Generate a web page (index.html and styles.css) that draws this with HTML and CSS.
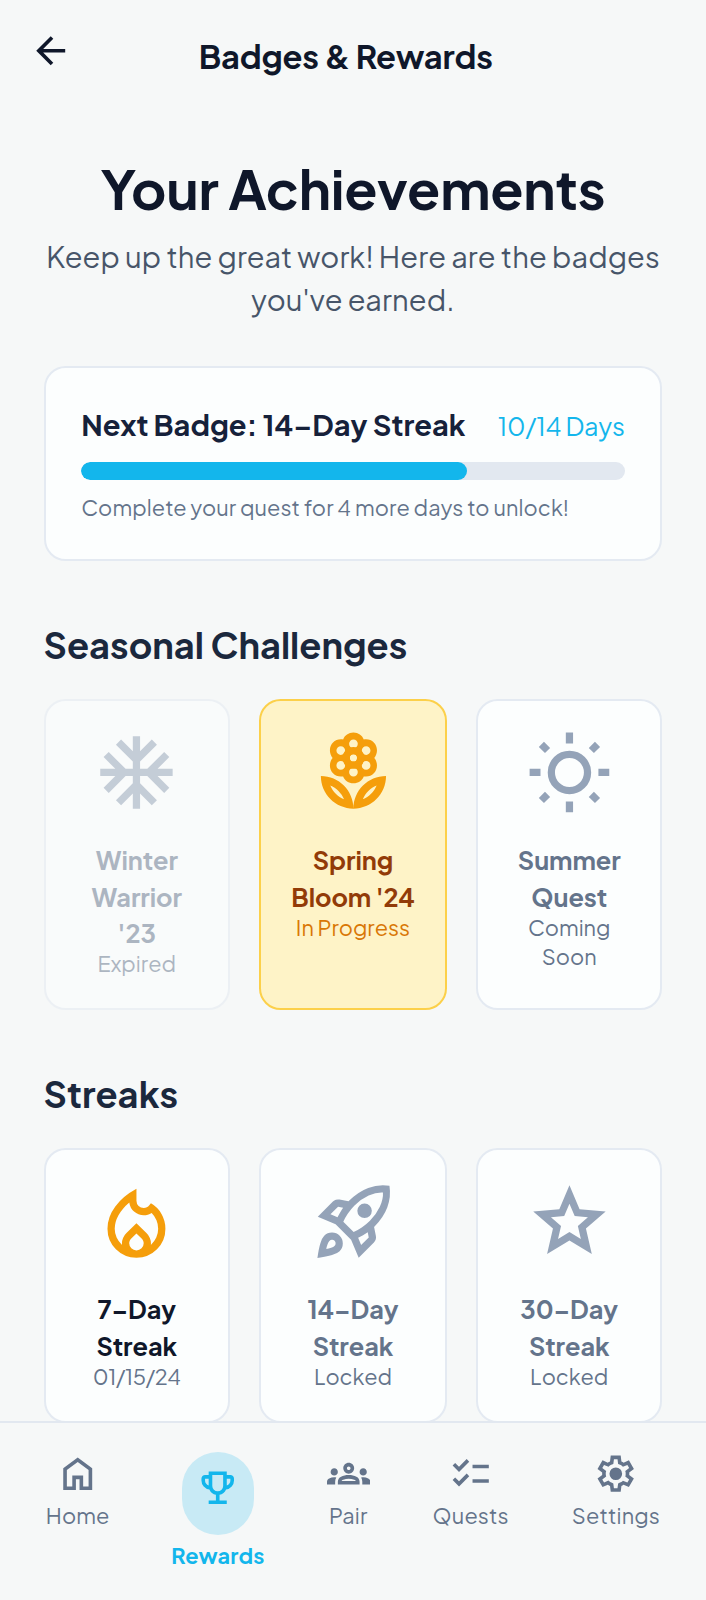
FILE: index.html
```html
<!DOCTYPE html>
<html lang="en">
<head>
<meta charset="utf-8">
<title>Badges &amp; Rewards</title>
<link rel="stylesheet" href="styles.css">
</head>
<body>
<div class="screen">
  <header class="topbar">
    <svg class="icon" viewBox="0 0 24 24"><path d="M20 11H7.83l5.59-5.59L12 4l-8 8 8 8 1.41-1.41L7.83 13H20v-2z"/></svg>
    <h2 class="topbar-title">Badges &amp; Rewards</h2>
  </header>
  <main class="content">
    <h1 class="headline">Your Achievements</h1>
    <p class="intro">Keep up the great work! Here are the badges<br>you've earned.</p>

    <section class="progress-card">
      <div class="progress-head">
        <span class="progress-title">Next Badge: 14–Day Streak</span>
        <span class="progress-count">10/14 Days</span>
      </div>
      <div class="bar"><div class="bar-fill" style="width:71%"></div></div>
      <p class="progress-note">Complete your quest for 4 more days to unlock!</p>
    </section>

    <h3 class="section-title">Seasonal Challenges</h3>
    <div class="badges seasonal">
      <article class="badge expired">
        <svg class="badge-icon" viewBox="0 0 24 24"><path d="M22 11h-4.17l3.24-3.24-1.41-1.42L15 11h-2V9l4.66-4.66-1.42-1.41L13 6.17V2h-2v4.17L7.76 2.93 6.34 4.34 11 9v2H9L4.34 6.34 2.93 7.76 6.17 11H2v2h4.17l-3.24 3.24 1.41 1.42L9 13h2v2l-4.66 4.66 1.42 1.41L11 17.83V22h2v-4.17l3.24 3.24 1.42-1.41L13 15v-2h2l4.66 4.66 1.41-1.42L17.83 13H22v-2z"/></svg>
        <p class="badge-name">Winter<br>Warrior<br>'23</p>
        <p class="badge-status">Expired</p>
      </article>
      <article class="badge current">
        <svg class="badge-icon" viewBox="0 0 24 24"><path d="M12 22c4.97 0 9-4.03 9-9-4.97 0-9 4.03-9 9zm2.6-2.6c.71-1.7 2.1-3.1 3.8-3.8-.71 1.7-2.1 3.1-3.8 3.8zM3 13c0 4.97 4.03 9 9 9 0-4.97-4.03-9-9-9zm2.6 2.6c1.7.71 3.1 2.1 3.8 3.8-1.7-.71-3.1-2.1-3.8-3.8z" fill-rule="evenodd"/><path fill-rule="evenodd" d="M5.5 10.1c0 1.7 1.3 3.05 3.05 3.05.2 0 .4 0 .6-.05.45 1.1 1.5 1.9 2.85 1.9s2.4-.8 2.85-1.9c.2.05.4.05.6.05 1.75 0 3.05-1.35 3.05-3.05 0-.8-.25-1.5-.75-2.1.5-.6.75-1.3.75-2.1 0-1.7-1.3-3.05-3.05-3.05-.2 0-.4 0-.6.05C14.4 1.8 13.35 1 12 1s-2.400.8-2.850 1.900c-.2-.05-.4-.05-.6-.05C6.800 2.850 5.500 4.200 5.500 5.900c0 .8.25 1.500.75 2.100-.5.6-.75 1.300-.75 2.100zM12 2.900a1.200 1.200 0 1 0 0 2.400 1.200 1.200 0 1 0 0-2.400zM12 10.700a1.200 1.200 0 1 0 0 2.400 1.200 1.200 0 1 0 0-2.400zM8.500 4.750a1.200 1.200 0 1 0 0 2.400 1.200 1.200 0 1 0 0-2.400zM15.500 4.750a1.200 1.200 0 1 0 0 2.400 1.200 1.200 0 1 0 0-2.400zM8.500 8.850a1.200 1.200 0 1 0 0 2.400 1.200 1.200 0 1 0 0-2.400zM15.500 8.850a1.200 1.200 0 1 0 0 2.400 1.200 1.200 0 1 0 0-2.400zM12 7a1 1 0 1 0 0 2 1 1 0 1 0 0-2z"/><circle class="line" cx="12" cy="8" r="2"/></svg>
        <p class="badge-name">Spring<br>Bloom '24</p>
        <p class="badge-status">In Progress</p>
      </article>
      <article class="badge">
        <svg class="badge-icon" viewBox="0 0 24 24"><g class="line"><circle cx="12" cy="12" r="5"/><path d="M12 1v3M12 20v3M1 12h3M20 12h3M18.05 5.950l1.7-1.7M5.950 5.950l-1.7-1.7M18.05 18.050l1.7 1.7M5.950 18.050l-1.7 1.7"/></g></svg>
        <p class="badge-name">Summer<br>Quest</p>
        <p class="badge-status">Coming<br>Soon</p>
      </article>
    </div>

    <h3 class="section-title">Streaks</h3>
    <div class="badges">
      <article class="badge earned">
        <svg class="badge-icon" viewBox="0 -960 960 960"><path d="M240-400q0 52 21 98.500t60 81.500q-1-5-1-9v-9q0-32 12-60t35-51l113-111 113 111q23 23 35 51t12 60v9q0 4-1 9 39-35 60-81.500t21-98.500q0-50-18.500-94.500T648-574q-20 13-42 19.500t-45 6.500q-62 0-107.500-41T401-690q-39 33-69 68.500t-50.500 72Q261-513 250.500-475T240-400Zm240 52-57 56q-11 11-17 25t-6 29q0 32 23.500 55t56.500 23q33 0 56.500-23t23.500-55q0-16-6-29.500T537-292l-57-56Zm0-492v132q0 34 23.500 57t57.500 23q18 0 33.500-7.500T622-658l18-22q74 42 117 117t43 163q0 134-93 227T480-80q-134 0-227-93t-93-227q0-129 86.500-245T480-840Z"/></svg>
        <p class="badge-name">7–Day<br>Streak</p>
        <p class="badge-status">01/15/24</p>
      </article>
      <article class="badge">
        <svg class="badge-icon" viewBox="0 -960 960 960"><path d="m226-559 78 33q14-28 29-54t33-52l-56-11-84 84Zm142 83 114 113q42-16 90-49t90-75q70-70 109.500-155.500T806-800q-72-5-158 34.500T492-656q-42 42-75 90t-49 90Zm178-65q-23-23-23-56.500t23-56.500q23-23 57-23t57 23q23 23 23 56.500T660-541q-23 23-57 23t-57-23Zm19 321 84-84-11-56q-26 18-52 32.500T532-299l33 79Zm313-653q19 121-23.500 235.500T708-419l20 99q4 20-2 39t-20 33L538-80l-84-197-171-171-197-84 167-168q14-14 33.500-20t39.500-2l99 20q104-104 218-147t235-24ZM157-321q35-35 85.500-35.500T328-322q35 35 34.500 85.500T327-151q-25 25-83.500 43T82-76q14-103 32-161.500t43-83.500Zm57 56q-10 10-20 36.500T180-175q27-4 53.500-13.500T270-208q12-12 13-29t-11-29q-12-12-29-11.500T214-265Z"/></svg>
        <p class="badge-name">14–Day<br>Streak</p>
        <p class="badge-status">Locked</p>
      </article>
      <article class="badge">
        <svg class="badge-icon" viewBox="0 -960 960 960"><path d="m354-287 126-76 126 77-33-144 111-96-146-13-58-136-58 135-146 13 111 97-33 143ZM233-120l65-281L80-590l288-25 112-265 112 265 288 25-218 189 65 281-247-149-247 149Z"/></svg>
        <p class="badge-name">30–Day<br>Streak</p>
        <p class="badge-status">Locked</p>
      </article>
    </div>
  </main>

  <nav class="tabs">
    <a class="tab home">
      <svg class="icon" viewBox="0 -960 960 960"><path d="M240-200h120v-240h240v240h120v-360L480-740 240-560v360Zm-80 80v-480l320-240 320 240v480H520v-240h-80v240H160Z"/></svg>
      <span>Home</span>
    </a>
    <a class="tab rewards active">
      <span class="pill"><svg class="icon" viewBox="0 -960 960 960"><path d="M280-120v-80h160v-124q-49-11-87.500-41.500T296-442q-75-9-125.500-65.500T120-640v-40q0-33 23.500-56.500T200-760h80v-80h400v80h80q33 0 56.500 23.500T840-680v40q0 76-50.500 132.500T664-442q-18 46-56.500 76.500T520-324v124h160v80H280Zm0-408v-152h-80v40q0 38 22 68.500t58 43.500Zm200 128q50 0 85-35t35-85v-240H360v240q0 50 35 85t85 35Zm200-128q36-13 58-43.500t22-68.500v-40h-80v152Z"/></svg></span>
      <span>Rewards</span>
    </a>
    <a class="tab pair">
      <svg class="icon" viewBox="0 0 24 24"><path d="M4 13c1.100 0 2-.9 2-2s-.9-2-2-2-2 .9-2 2 .9 2 2 2zm1.130 1.100c-.37-.06-.74-.1-1.130-.1-.99 0-1.930.21-2.780.58C.48 14.900 0 15.620 0 16.430V18h4.500v-1.610c0-.83.23-1.610.63-2.290zM20 13c1.100 0 2-.9 2-2s-.9-2-2-2-2 .9-2 2 .9 2 2 2zm4 3.430c0-.81-.48-1.530-1.220-1.850-.85-.37-1.790-.58-2.780-.58-.39 0-.76.04-1.130.1.4.68.63 1.460.63 2.290V18H24v-1.570zM16.240 13.650c-1.170-.52-2.610-.9-4.240-.9s-3.070.39-4.240.9C6.680 14.130 6 15.210 6 16.390V18h12v-1.610c0-1.180-.68-2.260-1.760-2.740zM8.070 16c.09-.23.13-.39.91-.69.97-.38 1.990-.56 3.020-.56s2.050.18 3.020.56c.77.3.81.46.91.69H8.070zM12 8c.55 0 1 .45 1 1s-.45 1-1 1-1-.45-1-1 .45-1 1-1m0-2c-1.660 0-3 1.340-3 3s1.340 3 3 3 3-1.340 3-3-1.340-3-3-3z"/></svg>
      <span>Pair</span>
    </a>
    <a class="tab quests">
      <svg class="icon" viewBox="0 0 24 24"><path d="M22 7h-9v2h9V7zm0 8h-9v2h9v-2zM5.540 11 2 7.460l1.410-1.410 2.120 2.120 4.240-4.240 1.410 1.410L5.540 11zm0 8L2 15.460l1.410-1.410 2.120 2.120 4.240-4.240 1.410 1.410L5.540 19z"/></svg>
      <span>Quests</span>
    </a>
    <a class="tab settings">
      <svg class="icon" viewBox="0 -960 960 960"><path d="m370-80-16-128q-13-5-24.500-12T307-235l-119 50L78-375l103-78q-1-7-1-13.500v-27q0-6.500 1-13.500L78-585l110-190 119 50q11-8 23-15t24-12l16-128h220l16 128q13 5 24.500 12t22.500 15l119-50 110 190-103 78q1 7 1 13.500v27q0 6.500-2 13.500l103 78-110 190-118-50q-11 8-23 15t-24 12L590-80H370Zm70-80h79l14-106q31-8 57.500-23.500T639-327l99 41 39-68-86-65q5-14 7-29.500t2-31.500q0-16-2-31.500t-7-29.500l86-65-39-68-99 42q-22-23-48.500-38.500T533-694l-13-106h-79l-14 106q-31 8-57.500 23.500T321-633l-99-41-39 68 86 64q-5 15-7 30t-2 32q0 16 2 31t7 30l-86 65 39 68 99-42q22 23 48.500 38.500T427-266l13 106Zm42-180q58 0 99-41t41-99q0-58-41-99t-99-41q-59 0-99.500 41T342-480q0 58 40.500 99t99.500 41Z"/></svg>
      <span>Settings</span>
    </a>
  </nav>
</div>
</body>
</html>
```
FILE: styles.css
```css
* { box-sizing: border-box; margin: 0; padding: 0; }
body { background: #f6f8f8; font-family: "Plus Jakarta Sans", Inter, "Open Sans", sans-serif; color: #0f172a; }
.screen { width: 706px; height: 1600px; display: flex; flex-direction: column; overflow: hidden; }
svg { display: block; fill: currentColor; flex: none; }
.icon { width: 43.45px; height: 43.45px; }
.line { fill: none; stroke: currentColor; stroke-width: 2; }

.topbar { height: 101px; padding: 29px; display: flex; flex: none; }
.topbar-title { flex: 1; margin: 6.6px 57.9px 0 0; text-align: center; font-size: 32.6px; line-height: 40.7px; font-weight: 700; letter-spacing: -0.19px; white-space: nowrap; }

.content { height: 1320px; flex: none; overflow: hidden; padding: 52.5px 43.6px 0; }
.headline { text-align: center; font-size: 54.3px; line-height: 68px; font-weight: 700; letter-spacing: -0.1px; white-space: nowrap; }
.intro { margin: 13.5px -20px 0; text-align: center; font-size: 29px; line-height: 43.45px; letter-spacing: 0.13px; color: #475569; font-weight: 400; white-space: nowrap; }

.progress-card { margin-top: 44px; height: 195px; padding: 35px 35.7px; border: 2px solid #e4eaf2; border-radius: 21.7px; background: #fcfefe; }
.progress-head { display: flex; justify-content: space-between; align-items: baseline; line-height: 43px; white-space: nowrap; }
.progress-title { font-size: 29px; font-weight: 700; color: #16213a; }
.progress-count { font-size: 25.3px; letter-spacing: -0.08px; color: #13b6ec; }
.bar { margin-top: 14px; height: 18px; border-radius: 9px; background: #e2e8f0; overflow: hidden; }
.bar-fill { height: 100%; border-radius: 9px; background: #13b6ec; }
.progress-note { margin-top: 13px; font-size: 21.7px; line-height: 29px; letter-spacing: 0.09px; color: #64748b; white-space: nowrap; }

.section-title { margin-top: 61px; font-size: 36.2px; line-height: 45px; font-weight: 700; letter-spacing: 0.02px; color: #1b283d; white-space: nowrap; }
.badges { margin-top: 32px; display: grid; grid-template-columns: 186.3px 188.2px 186.3px; gap: 29px; height: 275px; }
.badges.seasonal { height: 311px; }
.badge { display: flex; flex-direction: column; align-items: center; padding-top: 28px; border: 2px solid #e4eaf2; border-radius: 21.7px; background: #fcfefe; text-align: center; color: #64748b; }
.badge-icon { width: 86.9px; height: 86.9px; color: #94a3b8; }
.badge-name { margin-top: 26.6px; font-size: 25.3px; line-height: 36.3px; font-weight: 700; letter-spacing: -0.05px; }
.badge-status { margin-top: -2px; font-size: 21.7px; line-height: 28.96px; }
.expired { opacity: .5; }
.current { background: #fef3c7; border-color: #fcd04a; color: #923b08; }
.current .badge-icon, .earned .badge-icon { color: #f59e0b; }
.current .badge-status { color: #d97706; }
.earned .badge-name { color: #0f172a; }
.earned .badge-status { letter-spacing: -0.3px; }

.tabs { flex: 1; border-top: 2px solid #e2e8f0; padding: 29px 45.6px 0 46.2px; display: flex; justify-content: space-between; align-items: flex-start; font-size: 21.7px; line-height: 29px; letter-spacing: 0.15px; color: #64748b; }
.tab { display: flex; flex-direction: column; align-items: center; gap: 6px; white-space: nowrap; }
.home { width: 63px; }
.rewards { width: 92px; gap: 5.6px; }
.pair { width: 43.5px; }
.quests { width: 76px; }
.settings { width: 89px; }
.active { color: #13b6ec; font-weight: 700; }
.pill { width: 72.5px; height: 83px; padding: 13.8px 14.5px; border-radius: 36.3px; background: #c8eaf5; }
```
